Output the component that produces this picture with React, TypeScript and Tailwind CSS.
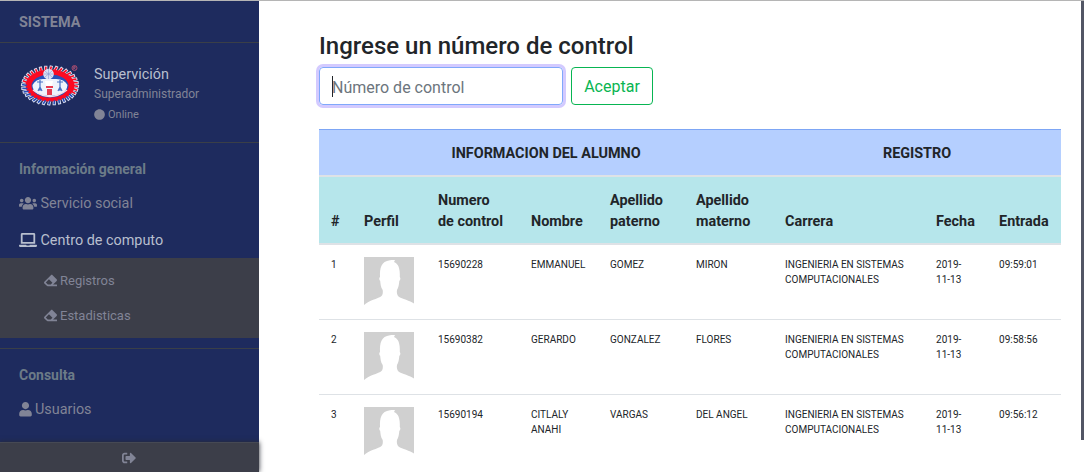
import React from "react";
import {
  FaCircle,
  FaEraser,
  FaLaptop,
  FaSignOutAlt,
  FaUser,
  FaUsers,
} from "react-icons/fa";

const teeth = Array.from({ length: 32 }, (_, i) => (i * 2 * Math.PI) / 32);

function Logo() {
  return (
    <svg width="60" height="42" viewBox="0 0 60 42" className="shrink-0">
      {teeth.map((a, i) => (
        <line
          key={i}
          x1={30 + Math.cos(a) * 22}
          y1={21.5 + Math.sin(a) * 14}
          x2={30 + Math.cos(a + 0.05) * 29}
          y2={21.5 + Math.sin(a + 0.05) * 20}
          stroke="#dfe3f3"
          strokeWidth="3.2"
        />
      ))}
      <ellipse cx="30" cy="21.5" rx="24.5" ry="16" fill="#fb0a22" />
      {teeth.map((a, i) => (
        <line
          key={i}
          x1={30 + Math.cos(a) * 23}
          y1={21.5 + Math.sin(a) * 15}
          x2={30 + Math.cos(a + 0.05) * 28}
          y2={21.5 + Math.sin(a + 0.05) * 19}
          stroke={a > 0.4 && a < 3.3 ? "#2850b8" : "#fb0a22"}
          strokeWidth="1.6"
        />
      ))}
      <ellipse cx="30" cy="22" rx="18.5" ry="11.5" fill="#2850b8" />
      <path d="M12.500 21Q16 14.500 24 15H35Q44 14.500 47.500 21Q47 27 41 30Q29 34 18 30Q12 26 12.500 21Z" fill="#eef3fc" />
      <circle cx="28.500" cy="10" r="5.300" fill="#dce2f5" />
      <path d="M25 7l7 6M32 7l-7 6M28.500 5v10M24 10h9" stroke="#8798d2" strokeWidth=".6" />
      <path d="M20 16v11M17 18h6M18 27l2-4 2 4M40 16v11M37 18h6M38 27l2-4 2 4" fill="none" stroke="#4771c5" strokeWidth="1.200" />
      <path d="M25 17h8l-1 5h-6z" fill="#fff" />
      <path d="M26 22h7v2h-7zM27 25h5v6h-5z" fill="#e63b50" />
      <path d="M13 26Q30 39 47 26" fill="none" stroke="#f8dce6" strokeWidth="1.500" />
      <circle cx="54.500" cy="4" r="2.500" fill="none" stroke="#a74a6d" strokeWidth="1" />
      <path d="M53.700 5.500v-3h1.500v1.400h-1.500l1.800 1.600" fill="none" stroke="#b2567a" strokeWidth=".7" />
    </svg>
  );
}

function Avatar() {
  return (
    <svg width="50" height="50" viewBox="0 0 50 50" className="block">
      <rect width="50" height="49" fill="#d0d0d0" />
      <path
        d="M0 50V48C5 43.500 14 41.500 17 39.500C19 38 19 35 18.700 33C16.800 30.500 16.500 27 16.200 24C15 23 15 20.500 16 20C15.700 11 17 4.500 26 3.300C29 2.800 31 3.200 31 3.200L30 5C34 6.300 36.200 11 35.800 20C36.800 21 36.500 23 35.300 24C35 27.500 34.500 30.500 33 33C32.500 35 33 38 34.500 39.500C38 42 46 43.500 50 46.500V50Z"
        fill="#fff"
      />
    </svg>
  );
}

const rows = [
  ["1", "15690228", "EMMANUEL", "GOMEZ", "MIRON", "09:59:01"],
  ["2", "15690382", "GERARDO", "GONZALEZ", "FLORES", "09:58:56"],
  ["3", "15690194", "CITLALY ANAHI", "VARGAS", "DEL ANGEL", "09:56:12"],
];

const headings: React.ReactNode[] = [
  "#",
  "Perfil",
  <>Numero<br />de control</>,
  "Nombre",
  <>Apellido<br />paterno</>,
  <>Apellido<br />materno</>,
  "Carrera",
  "Fecha",
  "Entrada",
];

function Sidebar() {
  return (
    <aside className="flex w-[259px] shrink-0 flex-col bg-[#1e2b5e] text-[14.4px] leading-[21px] text-[#818496]">
      <div className="h-[42px] border-b border-[#3a3f48] px-[19px] pt-[11px] font-bold">
        SISTEMA
      </div>
      <div className="flex h-[100px] gap-[14px] border-b border-[#3a3f48] pt-[21px] pl-5">
        <Logo />
        <div className="flex flex-col">
          <span className="text-[#b8bfce]">Supervición</span>
          <span className="text-xs leading-[18px]">Superadministrador</span>
          <span className="flex items-center gap-[3px] pt-[3px] text-[11px] leading-[17px]">
            <FaCircle size={11} />
            Online
          </span>
        </div>
      </div>
      <nav className="flex h-[206px] flex-col border-b border-[#3a3f48]">
        <div className="px-[19px] pt-4 pb-[5px] text-sm leading-[21px] font-bold text-[#6c7b88]">
          Información general
        </div>
        <a className="flex h-[37px] items-center gap-[3.500px] px-[19px]">
          <FaUsers className="h-[14.400px] w-[18px]" />
          Servicio social
        </a>
        <a className="flex h-9 items-center gap-[3.500px] px-[19px] text-[#b8bfce]">
          <FaLaptop className="h-[14.400px] w-[18px]" />
          Centro de computo
        </a>
        <div className="flex h-20 flex-col bg-[#3c3e49] pt-[5px] text-[13px]">
          <a className="flex h-[35px] items-center gap-[3px] pl-11">
            <FaEraser size={13} />
            Registros
          </a>
          <a className="flex h-[35px] items-center gap-[3px] pl-11">
            <FaEraser size={13} />
            Estadisticas
          </a>
        </div>
      </nav>
      <div className="flex grow flex-col">
        <div className="px-[19px] pt-4 pb-[5px] text-sm leading-[21px] font-bold text-[#6c7b88]">
          Consulta
        </div>
        <a className="flex h-[37px] items-center gap-[3px] px-[19px]">
          <FaUser className="h-[14.400px] w-[13px]" />
          Usuarios
        </a>
      </div>
      <div className="flex h-[30px] items-center justify-center border-t border-[#464954] bg-[#3c3e49] pr-[2px] shadow-[0_0_5px_#282a35]">
        <FaSignOutAlt size={14} />
      </div>
    </aside>
  );
}

export default function App() {
  return (
    <div className="flex h-[472px] w-[1084px] flex-col overflow-hidden bg-white font-['Roboto',sans-serif] text-[#212529]">
      <div className="h-px shrink-0 bg-[#b5b5b5]" />
      <div className="flex h-[471px]">
        <Sidebar />
        <main className="flex w-[822px] flex-col pt-[31px] pl-[60px]">
          <h4 className="text-2xl leading-[29px] font-medium">Ingrese un número de control</h4>
          <div className="mt-[6px] flex gap-2">
            <div className="flex h-[38px] w-[244px] items-center rounded border border-[#80a8fb] pl-3 text-base text-[#6c757d] shadow-[0_0_0_3px_#d3caff]">
              <span className="-mr-px h-[21px] w-px bg-[#212529]" />
              <span className="pt-[3px]">Número de control</span>
            </div>
            <button className="h-[38px] w-[82px] rounded border border-[#08b552] pt-[2px] text-base text-[#08b552]">
              Aceptar
            </button>
          </div>
          <table className="mt-6 w-[742px] table-fixed border-separate border-spacing-0 text-left">
            <colgroup>
              <col className="w-[33px]" />
              <col className="w-[74px]" />
              <col className="w-[93px]" />
              <col className="w-[79px]" />
              <col className="w-[86px]" />
              <col className="w-[89px]" />
              <col className="w-[151px]" />
              <col className="w-[63px]" />
              <col className="w-[74px]" />
            </colgroup>
            <thead className="text-[14.4px] leading-[21px] font-bold">
              <tr className="h-12 bg-[#b5cfff] text-center">
                <th colSpan={6} className="border-t border-b-2 border-t-[#7da6f5] border-b-[#dee2e6] pt-[2px]">
                  INFORMACION DEL ALUMNO
                </th>
                <th colSpan={3} className="border-t border-b-2 border-t-[#7da6f5] border-b-[#dee2e6] pt-[2px]">
                  REGISTRO
                </th>
              </tr>
              <tr className="h-[68px] bg-[#b6e6eb]">
                {headings.map((h, i) => (
                  <th key={i} className="border-b-2 border-[#dee2e6] pb-[11px] pl-3 align-bottom whitespace-nowrap">
                    {h}
                  </th>
                ))}
              </tr>
            </thead>
            <tbody className="text-[10px] leading-[15px]">
              {rows.map(([n, id, name, father, mother, time]) => (
                <tr key={n} className="h-[75px] align-top *:border-b *:border-[#dee2e6] *:pt-3 *:pl-3 last:*:border-b-0">
                  <td>{n}</td>
                  <td><Avatar /></td>
                  <td>{id}</td>
                  <td className="pr-3">{name}</td>
                  <td>{father}</td>
                  <td>{mother}</td>
                  <td>INGENIERIA EN SISTEMAS COMPUTACIONALES</td>
                  <td>2019-<br />11-13</td>
                  <td>{time}</td>
                </tr>
              ))}
            </tbody>
          </table>
        </main>
        <div className="h-[439px] w-[3px] bg-[#525665]" />
      </div>
    </div>
  );
}
